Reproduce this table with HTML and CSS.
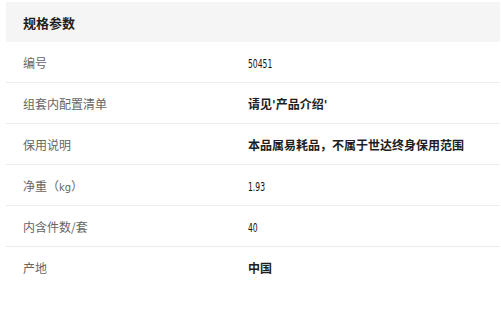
FILE: index.html
```html
<!DOCTYPE html>
<html lang="zh">
<head>
<meta charset="utf-8">
<link rel="stylesheet" href="styles.css">
</head>
<body>
<div class="specs">
  <div class="head">规格参数</div>
  <div class="row"><div class="label">编号</div><div class="value"><span class="num">50451</span></div></div>
  <div class="row"><div class="label">组套内配置清单</div><div class="value">请见<span class="q">'</span>产品介绍<span class="q">'</span></div></div>
  <div class="row"><div class="label">保用说明</div><div class="value">本品属易耗品，不属于世达终身保用范围</div></div>
  <div class="row"><div class="label">净重（<span class="unit">kg</span>）</div><div class="value"><span class="num">1.93</span></div></div>
  <div class="row"><div class="label">内含件数/套</div><div class="value"><span class="num">40</span></div></div>
  <div class="row last"><div class="label">产地</div><div class="value">中国</div></div>
</div>
</body>
</html>
```
FILE: styles.css
```css
html, body {
  margin: 0;
  padding: 0;
  background: #fff;
}
body {
  font-family: "Noto Sans CJK SC", "Noto Sans", sans-serif;
  color: #333;
}
.specs {
  margin: 2px 1px 0 6px;
}
.head {
  height: 40px;
  background: #f5f5f5;
  display: flex;
  align-items: center;
  padding-left: 17px;
  font-size: 13px;
  font-weight: bold;
  color: #1e1e1e;
}
.row {
  display: grid;
  grid-template-columns: 225px 1fr;
  height: 40px;
  align-items: center;
  border-bottom: 1px solid #ececec;
  padding-left: 17px;
}
.row.last {
  border-bottom: none;
}
.label {
  font-size: 12px;
  color: #666;
}
.unit {
  font-family: "DejaVu Sans", sans-serif;
  font-stretch: condensed;
  font-size: 11px;
}
.value {
  font-size: 12px;
  font-weight: bold;
  color: #1e1e1e;
}
.q {
  font-family: "DejaVu Sans", sans-serif;
  font-weight: bold;
  font-size: 12px;
}
.num {
  display: inline-block;
  font-family: "DejaVu Sans", sans-serif;
  font-stretch: condensed;
  font-weight: normal;
  font-size: 12.5px;
  color: #111;
  transform: scaleX(0.68);
  transform-origin: left center;
}
```
